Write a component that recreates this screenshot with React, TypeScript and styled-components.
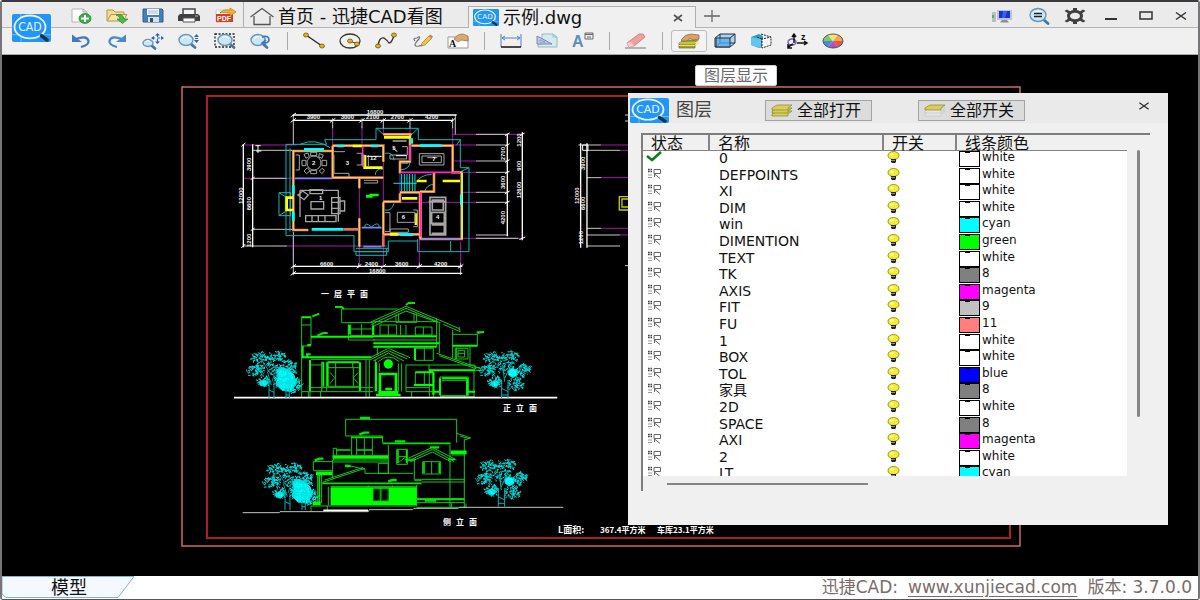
import React from "react";
import styled, { createGlobalStyle } from "styled-components";

const GlobalStyle = createGlobalStyle`
  *, *::before, *::after { box-sizing: border-box; }
  body {
    margin: 0;
    background: #ffffff;
    font-family: "DejaVu Sans", "Noto Sans CJK SC", sans-serif;
    color: #111111;
  }
  button { font-family: inherit; color: inherit; }
`;

const Window = styled.div`
  display: flex;
  flex-direction: column;
  min-height: 100vh;
  border: 2px solid #77757a;
  border-top-color: #3d3a3e;
  border-bottom: 1px solid #55545a;
  border-radius: 3px;
  overflow: hidden;
`;

const Header = styled.header`
  position: relative;
  border-bottom: 1px solid #a8a8a8;
  background: #f0f0f0;
`;

const BrandMark = styled.div`
  position: absolute;
  left: 10px;
  top: 12px;
  display: flex;
`;

const TitleRow = styled.div`
  display: flex;
  height: 26px;
  padding-left: 61px;
  border-bottom: 1px solid #b4b4b4;
  background: #ebebeb;
`;

const ToolRow = styled.div`
  display: flex;
  align-items: center;
  height: 26px;
  padding-left: 61px;
`;

const IconButton = styled.button<{ $active?: boolean; $width?: number }>`
  display: flex;
  flex: none;
  align-items: center;
  justify-content: center;
  width: ${(p) => p.$width ?? 36}px;
  height: 22px;
  padding: 0;
  border: 1px solid ${(p) => (p.$active ? "#bdbdbd" : "transparent")};
  border-radius: 3px;
  background: ${(p) => (p.$active ? "#f3f3f3" : "transparent")};
`;

const ButtonStrip = styled.div`
  display: flex;
  align-items: center;
  padding-top: 3px;
`;

const QuickBar = styled(ButtonStrip)`
  border-right: 1px solid #b0b0b0;
`;

const WindowControls = styled(ButtonStrip)`
  margin-left: auto;
`;

const Separator = styled.span`
  width: 1px;
  height: 18px;
  margin: 0 8px;
  background: #a9a9a9;
`;

const Tab = styled.button<{ $active?: boolean }>`
  display: flex;
  align-items: center;
  width: ${(p) => (p.$active ? 192 : 224)}px;
  height: 22px;
  padding: 0 0 0 4px;
  border: 0;
  background: transparent;
  font-size: 18px;
  line-height: 22px;
  white-space: nowrap;
  text-align: left;
  gap: ${(p) => (p.$active ? 4 : 2)}px;
`;

const TabHolder = styled.div<{ $active?: boolean }>`
  display: flex;
  align-items: center;
  height: 22px;
  margin-top: 4px;
  ${(p) =>
    p.$active &&
    `
    border: 1px solid #b0b0b0;
    border-bottom: 0;
    background: #f0f0f0;
  `}
`;

const Canvas = styled.main`
  position: relative;
  display: flex;
  flex: 1;
  min-height: 521px;
  background: #000000;
`;

const Drawing = styled.svg`
  display: block;
  flex: 1;
  min-width: 0;
  fill: none;
`;

const Tooltip = styled.div`
  position: absolute;
  left: 693px;
  top: 10px;
  padding: 0 8px;
  border: 1px solid #d0d0d0;
  border-radius: 2px;
  background: #ffffff;
  color: #6a6a6a;
  font-size: 16px;
  line-height: 19px;
`;

const Dialog = styled.section`
  position: absolute;
  left: 626px;
  top: 38px;
  width: 540px;
  padding-bottom: 34px;
  background: #f0f0f0;
`;

const DialogHeader = styled.div`
  display: flex;
  align-items: center;
  height: 30px;
  padding: 4px 10px 0 2px;
  background: #eaeaea;
`;

const DialogTitle = styled.h2`
  width: 89px;
  margin: 0 0 0 7px;
  color: #444444;
  font-size: 18px;
  font-weight: 400;
  line-height: 24px;
`;

const DialogButton = styled.button`
  display: flex;
  align-items: center;
  width: 107px;
  height: 21px;
  margin-right: 46px;
  padding: 2px 0 0 5px;
  border: 1px solid #a3a3a3;
  background: #dcdcdc;
  font-size: 16px;
  line-height: 18px;
  white-space: nowrap;
  gap: 4px;
`;

const CloseDialog = styled(IconButton)`
  margin: 0 0 8px auto;
`;

const ListFrame = styled.div`
  display: grid;
  grid-template-columns: 484px 1fr;
  margin: 10px 18px 0 13px;
  border-top: 2px solid #7d7d7d;
  border-left: 2px solid #7d7d7d;
`;

const ListView = styled.div`
  height: 341px;
  overflow: hidden;
  background: #ffffff;
`;

const LayerTable = styled.table`
  width: 100%;
  height: 348px;
  border-collapse: separate;
  border-spacing: 0;
  table-layout: fixed;
`;

const HeadCell = styled.th<{ $width: number; $last?: boolean }>`
  width: ${(p) => p.$width}px;
  height: 16px;
  padding: 3px 0 0 8px;
  border-right: ${(p) => (p.$last ? "0" : "2px solid #858585")};
  border-bottom: 1px solid #858585;
  background: #f0f0f0;
  font-size: 16px;
  font-weight: 400;
  line-height: 12px;
  text-align: left;
`;

const Cell = styled.td<{ $indent: number; $size?: number }>`
  height: auto;
  padding: 0 0 0 ${(p) => p.$indent}px;
  font-size: ${(p) => p.$size ?? 14}px;
  line-height: 14px;
  vertical-align: top;
  white-space: nowrap;
`;

const ColorEntry = styled.div`
  display: flex;
  height: 16px;
  line-height: 13px;
  gap: 2px;
`;

const Swatch = styled.span<{ $color: string }>`
  width: 21px;
  height: 16px;
  border: 1px solid #000000;
  background: ${(p) => p.$color};
  &::before {
    content: "";
    display: block;
    width: 5px;
    height: 1px;
    margin-left: 5px;
    background: #000000;
  }
`;

const VerticalTrack = styled.div`
  padding: 15px 0 0 10px;
`;

const VerticalThumb = styled.div`
  width: 3px;
  height: 267px;
  border-radius: 2px;
  background: #858585;
`;

const HorizontalTrack = styled.div`
  height: 15px;
  padding: 7px 0 0 24px;
`;

const HorizontalThumb = styled.div`
  width: 201px;
  height: 2px;
  background: #858585;
`;

const Footer = styled.footer`
  display: flex;
  align-items: center;
  justify-content: space-between;
  height: 23px;
  padding-right: 6px;
  background: #ffffff;
`;

const ModelTab = styled.button`
  display: grid;
  width: 134px;
  height: 23px;
  padding: 0;
  border: 0;
  background: transparent;
  font-size: 18px;
  line-height: 23px;
  > * { grid-area: 1 / 1; }
`;

const Credits = styled.div`
  display: flex;
  color: #7b6b69;
  font-size: 17px;
  line-height: 23px;
  white-space: nowrap;
  gap: 10px;
  a { color: inherit; text-underline-offset: 3px; }
`;

function Logo({ width, height }: { width: number; height: number }) {
  return (
    <svg width={width} height={height} viewBox="0 0 39 27" preserveAspectRatio="none" aria-hidden="true">
      <rect width="39" height="27" rx="2" fill="#2196f8" />
      <path d="M0 20H39M9 0V27" stroke="#6fbcfb" strokeWidth="1" />
      <ellipse cx="18" cy="12.500" rx="15.500" ry="11" fill="#2196f8" stroke="#e8f5ff" strokeWidth="1.800" />
      <text x="18" y="16" fill="#e8f5ff" fontSize="11" fontFamily="DejaVu Sans, sans-serif" textAnchor="middle">CAD</text>
      <path d="M29.500 21L35 25" stroke="#16364f" strokeWidth="3.500" strokeLinecap="round" />
    </svg>
  );
}

/* Every glyph is drawn around the origin of a 28 x 20 box. */
const Glyph = ({ children }: { children: React.ReactNode }) => (
  <svg width="28" height="20" viewBox="-14 -10 28 20" fill="none" aria-hidden="true">{children}</svg>
);

const lens = (cx: number, cy: number, r: number) => (
  <>
    <path d={`M${cx + r - 1} ${cy + r - 2}l4 3.500`} stroke="#3f78a8" strokeWidth="2.800" strokeLinecap="round" />
    <ellipse cx={cx} cy={cy} rx={r + 1} ry={r - 0.5} fill="#c9e8f7" stroke="#6a94ba" strokeWidth="1.400" />
    <path d={`M${cx - r + 2} ${cy - 1}q${r - 2} -${r - 1} ${2 * r - 4} 0`} stroke="#ffffff" strokeWidth="1.200" />
  </>
);

const node = (x: number, y: number) => (
  <ellipse cx={x} cy={y} rx="2.500" ry="2" fill="#e3b51a" stroke="#6d5307" strokeWidth=".8" />
);

const glyphs: Record<string, React.ReactNode> = {
  新建: (
    <>
      <path d="M-9 -7H2L6 -4V6H-9Z" fill="#fbfbfb" stroke="#b5b5b5" />
      <path d="M2 -7V-4H6" stroke="#a5a5a5" />
      <ellipse cx="4" cy="2.500" rx="6" ry="5" fill="#35ab45" stroke="#1f8530" strokeWidth=".7" />
      <path d="M0 2.500H8M4 -1V6" stroke="#fff" strokeWidth="2" />
    </>
  ),
  打开: (
    <>
      <path d="M-10 5V-6H-4L-2 -4H7V-1" fill="#f3dc94" stroke="#b99447" />
      <path d="M-10 5L-6 -1.500H10L6 5Z" fill="#f6e3a6" stroke="#b99447" />
      <path d="M-1 -1Q6 -3 7 3H11L5.500 7.500L0 3H3Q3 0 -1 -1Z" fill="#4cb848" stroke="#2b8630" strokeWidth=".7" />
    </>
  ),
  保存: (
    <>
      <path d="M-10 -7H9L10 -6V6H-10Z" fill="#4480b8" stroke="#2d5d92" />
      <path d="M-6 -7H6V-1H-6Z" fill="#f5f9fc" />
      <path d="M-5 -5H5M-5 -3H5" stroke="#a9bccc" />
      <path d="M-5 1H6V6H-5Z" fill="#d8e0e6" />
      <path d="M-3 2H0V6H-3Z" fill="#2d5070" />
    </>
  ),
  打印: (
    <>
      <path d="M-6 -1V-7H6V-1" fill="#f4f4f4" stroke="#444" strokeWidth="1.500" />
      <path d="M-9 -2H9L11 0V5H-11V0Z" fill="#3e4043" />
      <path d="M-6 2H6V6H-6Z" fill="#fafafa" stroke="#555" />
      <path d="M6 0H9" stroke="#bbb" strokeWidth="1" />
    </>
  ),
  转换PDF: (
    <>
      <path d="M-9 -6H3V6H-9Z" fill="#fafafa" stroke="#ccc" />
      <path d="M-9 -2H8V6H-9Z" fill="#dc3a22" />
      <text x="-8" y="5" fontSize="7" fontWeight="700" fontFamily="Liberation Sans, sans-serif" fill="#fff">PDF</text>
      <path d="M-5 -3Q-2 -7 5 -6V-8L11 -4L5 0V-3Q-1 -4 -5 -3Z" fill="#efb52c" stroke="#b87c13" strokeWidth=".7" />
    </>
  ),
  首页: <path d="M-11.500 0L0 -8.500L11.500 0M-8 -1V7.500H8V-1" stroke="#555" strokeWidth="1.300" />,
  新标签: <path d="M-8 0H8M0 -6V6" stroke="#666" strokeWidth="1.300" />,
  关闭标签: <path d="M-4 -3L4 3M4 -3L-4 3" stroke="#555" strokeWidth="1.700" />,
  远程: (
    <>
      <path d="M-11 -4H-7V6H-11Z" fill="#b8bec4" />
      <path d="M-10 -1V2" stroke="#3da344" strokeWidth="1.500" />
      <path d="M-6 -6H9V4H-6Z" fill="#bfc4ce" />
      <path d="M-4 -5H7V2H-4Z" fill="#1834d0" />
      <path d="M0 -5H4L2 2H-1Z" fill="#3f5df2" />
      <path d="M-1 4H4L6 6.500H-3Z" fill="#888e97" />
    </>
  ),
  查看: <>{lens(-1, -1, 7)}<path d="M-5 -2.500H3M-5 .5H3" stroke="#222" strokeWidth="1.400" /></>,
  设置: (
    <>
      <path d="M-2 -8H2V8H-2ZM-10.500 -5L-8 -6.500L10.500 5L8 6.500ZM10.500 -5L8 -6.500L-10.500 5L-8 6.500Z" fill="#3f3f3f" />
      <ellipse rx="6.500" ry="4.800" fill="#ebebeb" stroke="#3f3f3f" strokeWidth="3" />
    </>
  ),
  最小化: <path d="M-6 3H6" stroke="#333" strokeWidth="1.800" />,
  最大化: <path d="M-6 -4H6V3H-6Z" stroke="#333" strokeWidth="1.500" />,
  关闭: <path d="M-5 -3.500L5 3.500M5 -3.500L-5 3.500" stroke="#333" strokeWidth="1.500" />,
  撤销: (
    <>
      <path d="M-5 -2Q6 -6 7.500 0Q8 4 0 6" stroke="#4377c4" strokeWidth="2.300" />
      <path d="M-9 -6.500V1H1Z" fill="#4377c4" />
    </>
  ),
  重做: (
    <>
      <path d="M5 -2Q-6 -6 -7.500 0Q-8 4 0 6" stroke="#4b87cc" strokeWidth="2.300" />
      <path d="M9 -6.500V1H-1Z" fill="#4b87cc" />
    </>
  ),
  平移: (
    <>
      {lens(-5, 2, 4)}
      <path d="M-1 -3H10M4.500 -7V1" stroke="#2a64b8" strokeWidth="1.200" strokeDasharray="3 2" />
      <path d="M4.500 -8L7 -5.500H2ZM4.500 3L7 .5H2ZM-2 -3L1 -5V-1ZM11 -3L8 -5V-1Z" fill="#2a64b8" />
    </>
  ),
  缩放: (
    <>
      {lens(-3, -1, 6)}
      <path d="M7.500 -7L10 -4H5ZM7.500 2L10 -1H5Z" fill="#2a64b8" />
      <path d="M6 -2.500H9" stroke="#2a64b8" />
    </>
  ),
  窗口缩放: (
    <>
      <rect x="-10" y="-7" width="19" height="13" stroke="#222" strokeWidth="1.300" strokeDasharray="2 1.500" />
      {lens(0, -1, 6)}
    </>
  ),
  上一视图: <>{lens(-3, -1, 6)}<path d="M1 -4Q8 -6 8 -1Q8 2 2 2M5 -1L1 2L5 4" stroke="#3f79bf" strokeWidth="1.700" /></>,
  直线: <><path d="M-8 -6L8 5" stroke="#222" strokeWidth="1.300" />{node(-8, -6)}{node(8, 5)}</>,
  圆: <><ellipse rx="10" ry="7" stroke="#333" strokeWidth="1.300" /><path d="M0 0L7 3" stroke="#333" />{node(0, 0)}{node(7, 3)}</>,
  曲线: <><path d="M-8 5Q-7 -4 -2 -3Q1 -1 3 2Q6 2 8 -6" stroke="#333" strokeWidth="1.300" />{node(-8, 5)}{node(8, -6)}</>,
  画笔: (
    <>
      <path d="M-7 0Q-10 -3 -5 -3Q-1 -6 -3 -2Q-9 4 -6 5Q-2 6 2 3" stroke="#6b7480" strokeWidth="1.200" />
      <path d="M0 2L7 -5L10 -3L3 4L-1 5Z" fill="#f0c545" stroke="#a27823" strokeWidth=".7" />
      <path d="M7 -5L8 -6.500L11 -4.500L10 -3Z" fill="#dc6a61" />
    </>
  ),
  文字: (
    <>
      <path d="M-10 -4H10V7H-10Z" fill="#fdfdfd" stroke="#999" />
      <path d="M-4 -2Q-1 -7 5 -7L10 -5V0L3 -1L0 1Z" fill="#d9aa76" stroke="#9a6b38" strokeWidth=".7" />
      <text x="-9" y="6" fontSize="10" fontWeight="700" fontFamily="Liberation Serif, serif" fill="#111">A</text>
    </>
  ),
  测量长度: <><path d="M-10 -7V6M10 -7V6M-9 -3H9M-6 -5L-9 -3L-6 -1M6 -5L9 -3L6 -1" stroke="#4c7fd1" /><path d="M-10 6H10" stroke="#111" strokeWidth="1.500" /></>,
  测量面积: (
    <>
      <path d="M-5 -7H6L10 -4V6H-9V3H-5Z" fill="#d3ecf2" stroke="#97b9c4" />
      <path d="M6 -7V-4H10" stroke="#97b9c4" />
      <path d="M-10 -5V3H5Z" fill="#bcc7e3" stroke="#7a8ab6" />
      <path d="M-7 -1V1H-2Z" fill="#f2f5fb" stroke="#7a8ab6" strokeWidth=".7" />
    </>
  ),
  文字样式: (
    <>
      <text x="-11" y="6" fontSize="16" fontWeight="700" fontFamily="Liberation Sans, sans-serif" fill="#5b8dbf">A</text>
      <path d="M2 -8H10V-2H2ZM2 -6.500H10M4 -4H8" stroke="#666" />
    </>
  ),
  橡皮擦: (
    <>
      <path d="M-11 7H10" stroke="#777" strokeWidth="1.200" />
      <path d="M-9 2L3 -7H7L9 -4L-2 5L-7 6Z" fill="#eda29d" stroke="#c5746e" strokeWidth=".8" />
      <path d="M-9 2L-5 1L-2 5L-7 6Z" fill="#f8cfcb" />
    </>
  ),
  图层显示: (
    <>
      <path d="M-10 2L-5 -1H10L6 2V7H-10Z" fill="#a9a12d" stroke="#6d681a" strokeWidth=".7" />
      <path d="M-10 2H6L10 -1M-10 4.500H6L10 2" stroke="#e5df7c" />
      <path d="M-8 -1Q-4 -7 2 -7L10 -6L10 -2L4 -1L1 -3L-2 0H-7Z" fill="#d6a36b" stroke="#8d6032" strokeWidth=".7" />
    </>
  ),
  三维视图: (
    <>
      <path d="M-10 -3L-5 -7H10V2L5 6H-10Z" fill="#a8d4f2" stroke="#234" />
      <path d="M-5 -7V2H10M-5 2L-10 6" stroke="#234" />
      <path d="M-9 -3H5V6H-9Z" fill="#5aaae6" fillOpacity=".75" stroke="#234" />
      <path d="M5 -3L10 -7" stroke="#234" />
    </>
  ),
  线框: (
    <>
      <path d="M-10 -4L-2 -7L2 -5V6L-2 7L-10 4Z" fill="#2a9cd2" />
      <path d="M-10 -4L0 -2V7L-10 4Z" fill="#63c5ea" />
      <path d="M0 -7L10 -4V4L1 7V-2L10 -4M1 -2L-4 -4" fill="#f8f8f8" stroke="#222" strokeDasharray="2 1" />
    </>
  ),
  坐标: (
    <>
      <ellipse cx="-5" cy="1" rx="4" ry="3" stroke="#765fc5" strokeWidth="1.500" />
      <path d="M-3 2V-6M-5 -4L-3 -7L-1 -4M0 2H9M7 0L10 2L7 4M-4 3L-9 6M-9 3V7H-5" stroke="#111" strokeWidth="1.500" />
      <text x="4" y="-1" fontSize="9" fontWeight="700" fontFamily="Liberation Sans, sans-serif" fill="#111">z</text>
    </>
  ),
  颜色: (
    <>
      <path d="M0 0L-10 0A10 7 0 0 1 -5 -6Z" fill="#82ca62" />
      <path d="M0 0L-5 -6A10 7 0 0 1 5 -6Z" fill="#f3e675" />
      <path d="M0 0L5 -6A10 7 0 0 1 10 0Z" fill="#f2a549" />
      <path d="M0 0L10 0A10 7 0 0 1 5 6Z" fill="#e2574a" />
      <path d="M0 0L5 6A10 7 0 0 1 -5 6Z" fill="#b44cc2" />
      <path d="M0 0L-5 6A10 7 0 0 1 -10 0Z" fill="#4a8ade" />
      <ellipse rx="10" ry="7" stroke="#555" />
    </>
  ),
};

function Tool({ name, active, width }: { name: string; active?: boolean; width?: number }) {
  return (
    <IconButton type="button" aria-label={name} $active={active} $width={width}>
      <Glyph>{glyphs[name]}</Glyph>
    </IconButton>
  );
}

const toolGroups = [
  ["撤销", "重做", "平移", "缩放", "窗口缩放", "上一视图"],
  ["直线", "圆", "曲线", "画笔", "文字"],
  ["测量长度", "测量面积", "文字样式"],
  ["橡皮擦"],
  ["图层显示", "三维视图", "线框", "坐标", "颜色"],
];

const layers: [string, string, string][] = [
  ["0", "white", "#ffffff"],
  ["DEFPOINTS", "white", "#ffffff"],
  ["XI", "white", "#ffffff"],
  ["DIM", "white", "#ffffff"],
  ["win", "cyan", "#00ffff"],
  ["DIMENTION", "green", "#00ff00"],
  ["TEXT", "white", "#ffffff"],
  ["TK", "8", "#808080"],
  ["AXIS", "magenta", "#ff00ff"],
  ["FIT", "9", "#c0c0c0"],
  ["FU", "11", "#ff7f7f"],
  ["1", "white", "#ffffff"],
  ["BOX", "white", "#ffffff"],
  ["TOL", "blue", "#0000ff"],
  ["家具", "8", "#808080"],
  ["2D", "white", "#ffffff"],
  ["SPACE", "8", "#808080"],
  ["AXI", "magenta", "#ff00ff"],
  ["2", "white", "#ffffff"],
  ["LT", "cyan", "#00ffff"],
];

const StateIcon = ({ current }: { current: boolean }) => (
  <svg width="18" height="12" viewBox="0 0 18 12" fill="none" role="img" aria-label={current ? "当前" : "图层"}>
    {current ? (
      <path d="M1 5L6 9L15 1" stroke="#0c7d1c" strokeWidth="2.500" />
    ) : (
      <>
        <path d="M2 1.500H6M2 3.500H6" stroke="#444" strokeWidth="1.300" strokeDasharray="1.700 .8" />
        <path d="M2 7H6M2 9.500H6" stroke="#999" />
        <path d="M8 1.500H14.500V5.500H8ZM8.500 6L14 10.500M8.500 6V9" stroke="#666" />
      </>
    )}
  </svg>
);

const Bulb = () => (
  <svg width="13" height="13" viewBox="0 0 13 13" role="img" aria-label="开">
    <ellipse cx="6.500" cy="4.500" rx="5.500" ry="4" fill="#f5ee2b" stroke="#9a941a" />
    <ellipse cx="5" cy="3.500" rx="2" ry="1.200" fill="#fffcb8" />
    <path d="M4 8H9V11L8 12H5L4 11Z" fill="#222" />
    <path d="M4 9.500H8" stroke="#aaa" strokeWidth=".8" />
  </svg>
);

const Stack = ({ single }: { single?: boolean }) => (
  <svg width="22" height="14" viewBox="0 0 22 14" aria-hidden="true">
    {[8, 5, 2].map((y, i) => (
      <path
        key={y}
        d={`M1 ${y + 2}L6 ${y - 1}H21L17 ${y + 2}V${y + 4}H1Z`}
        fill={single && i < 2 ? "#e6e6e6" : "#d8cf55"}
        stroke={single && i < 2 ? "#c4c4c4" : "#8a8330"}
        strokeWidth=".7"
      />
    ))}
  </svg>
);

/* Foliage: short twigs scattered over clumps with a fixed pseudo-random sequence. */
function foliage(clumps: number[][]) {
  let seed = 17;
  const next = () => {
    seed = (seed * 16807) % 2147483647;
    return seed / 2147483647;
  };
  let d = "";
  clumps.forEach(([cx, cy, rx, ry, count]) => {
    for (let i = 0; i < count; i++) {
      const a = next() * Math.PI * 2;
      const r = Math.sqrt(next());
      const x = Math.round(cx + Math.cos(a) * rx * r);
      const y = Math.round(cy + Math.sin(a) * ry * r);
      d += `M${x} ${y}l${Math.round(next() * 14 - 7)} ${Math.round(next() * 10 - 5)}l${Math.round(next() * 8 - 4)} ${Math.round(next() * 8 - 4)}`;
    }
  });
  return d;
}

const pairFoliage = foliage([
  [40, 18, 26, 16, 60], [90, 16, 26, 16, 60], [24, 56, 26, 18, 60], [50, 88, 18, 14, 40],
  [122, 46, 24, 20, 60], [76, 48, 28, 22, 36], [115, 78, 36, 34, 150], [142, 100, 22, 24, 80],
]);
const singleFoliage = foliage([
  [38, 18, 24, 16, 60], [90, 14, 28, 14, 60], [22, 56, 24, 18, 60], [46, 90, 20, 16, 54],
  [130, 56, 20, 20, 64], [76, 45, 34, 22, 44], [108, 95, 24, 20, 64],
]);

const PairTree = ({ x, y }: { x: number; y: number }) => (
  <g transform={`translate(${x} ${y})`} stroke="#00e0e0" strokeWidth="3">
    <path d="M88 55L104 48L124 56L140 70L146 92L132 120L104 116L86 98L92 76Z" fill="#00ffff" />
    <path d="M36 90L50 84L62 92L56 102L40 102Z" fill="#00ffff" />
    <path d={pairFoliage} />
    <path d="M65 85V140M80 90V140M65 115L80 122M116 110V140M126 110V140M116 130H126" stroke="#00b4b4" />
    <path d="M72 100L60 60M74 90L90 40M72 70L40 20" stroke="#009c9c" />
  </g>
);

const SingleTree = ({ x, y }: { x: number; y: number }) => (
  <g transform={`translate(${x} ${y})`} stroke="#00d8d8" strokeWidth="3">
    <path d="M84 58L96 50L112 56L112 70L98 78L86 70Z" fill="#00ffff" />
    <path d="M32 92L46 86L58 92L52 104L38 104Z" fill="#00ffff" />
    <path d={singleFoliage} />
    <path d="M65 85V140M84 85V140M65 110L84 120M65 130H84M74 90L68 40M74 80L98 30" stroke="#00b4b4" />
  </g>
);

const Spaced = ({ text, x, y, step }: { text: string; x: number; y: number; step: number }) => (
  <>
    {Array.from(text).map((c, i) => (
      <text key={i} x={x + i * step} y={y} fontSize="8" fontWeight="700">{c}</text>
    ))}
  </>
);

const dims: [string, number, number][] = [
  ["16800", 435, 56], ["3900", 250, 73], ["3000", 352, 73], ["2100", 428, 73], ["2700", 502, 73], ["4200", 605, 73],
  ["6600", 290, 512], ["2400", 424, 512], ["3600", 515, 512], ["4200", 632, 512], ["16800", 442, 534],
];
const sideDims: [string, number, number][] = [
  ["12000", 38, 302], ["3900", 64, 208], ["6600", 64, 326], ["1200", 62, 436],
  ["2700", 826, 176], ["3600", 826, 262], ["4200", 826, 368], ["1200", 872, 135], ["900", 872, 212], ["12600", 872, 285],
  ["12000", 1046, 302], ["3900", 1066, 205], ["6600", 1066, 325], ["1200", 1058, 428],
];
const rooms: [string, number, number][] = [
  ["1", 272, 316], ["2", 251, 210], ["3", 352, 209], ["12", 430, 195], ["5", 492, 165], ["6", 520, 371], ["7", 612, 197], ["4", 623, 371],
];

const FloorPlan = () => (
  <g transform="translate(230 95) scale(.3333)" strokeWidth="3">
    <path stroke="#a818a8" d="M308 95V150M396 95V150M460 95V120M540 95V120M668 95V150M388 250V514M460 180V330M460 440V514M568 430V514M692 440V514M166 453H470M40 150H200M40 250H310M510 200V325M668 118H877M668 150H738M668 198H738M690 232H738M690 292H738M510 322H738M700 430H877M190 420V500M1113 150H1220M1113 248H1220M1113 400H1220M1170 166H1220M1170 420H1220" />
    <path stroke="#c8c8c8" d="M190 60V150M190 410V540M308 70V100M396 70V100M460 70V100M540 70V100M668 70V100M676 60V118M68 166H190M68 250H170M68 403H190M40 453H170M738 118H835M738 150H835M738 198H835M738 232H835M738 292H835M738 322H835M738 420H835M738 430H865M386 505V518M568 505V518M692 505V540M1071 166H1170M1071 420H1170M1071 453H1170M1045 150H1113M1071 248H1113M1071 400H1113M1185 60H1195M1185 78H1195M1185 512H1195" />
    <path stroke="#ffffff" strokeWidth="4" d="M188 60H680M188 76H670M40 148V457M68 148V457M188 514H697M188 535H697M832 116V424M877 112V436M1052 145V458M1071 145V458" />
    <path stroke="#ffffff" strokeWidth="3" d="M182 66L198 54M182 82L198 70M300 82L316 70M388 82L404 70M452 82L468 70M532 82L548 70M662 82L676 70M182 520L198 508M182 541L198 529M380 520L394 508M452 520L468 508M560 520L576 508M684 520L700 508M34 154L46 144M34 459L46 447M62 254L74 246M62 407L74 399M76 152H92M84 150V174M78 168H94M825 122L839 114M825 154L839 146M825 202L839 194M825 236L839 228M825 296L839 288M825 326L839 318M870 122L884 114M868 434L886 426" />
    <path stroke="#10b8b8" d="M168 148H290L284 134H438V100H565V134H691V218H717V470H563V432M168 148V422H372V470H475V438H563M180 160V410M210 148Q255 128 300 158M147 293H182V362H147ZM147 293L166 305V350L147 362M378 460H475M378 470V481H470V460M385 470H465M440 100L460 118M565 100L545 118M465 175Q490 170 492 196M510 205H535M540 200Q540 222 512 225M436 240Q436 220 460 222M465 345Q485 350 492 325M404 398Q404 378 425 396Q446 376 448 398M584 290Q590 270 610 268M560 262Q570 240 605 238M662 438V468M691 134L680 150M717 218L692 230" />
    <path stroke="#00e5e5" strokeWidth="3" d="M515 237V290M523 237V290M531 237V290M539 237V290M547 237V290M555 237V290M490 265H560" />
    <path stroke="#e07058" strokeWidth="8" d="M190 165V405H235M190 168H308M308 152H460V200M308 152V248H460M460 118H545M540 120V200H510V235M545 152H668V232H695V432H572V292M460 322V418M510 292H570V430M460 320H510V295M388 250V280M388 370V455M460 400V455M340 403H388M462 418H568M612 232V290H570" />
    <path stroke="#f6e458" strokeWidth="3" d="M190 165V405H235M190 168H308M308 152H460V200M308 152V248H460M460 118H545M540 120V200H510V235M545 152H668V232H695V432H572V292M460 322V418M510 292H570V430M460 320H510V295M388 250V280M388 370V455M462 418H568M612 232V290H570" />
    <path stroke="#ff20d0" strokeWidth="5" d="M512 232H690M398 155V215M540 150V198M572 292V425" />
    <path stroke="#ffff00" strokeWidth="8" d="M462 127H542M368 153H396M400 218H458M560 258H590M638 258H690M516 310H562M190 308H170V345H190M480 418H505M405 180V215M558 355V390" />
    <path stroke="#00ffff" strokeWidth="8" d="M320 153H343M422 153H446M570 152H635M190 270V298M190 350V378M245 403H340M508 419H550M694 298V330M222 163H282M545 130V146" />
    <path stroke="#8080ff" strokeWidth="5" d="M195 250H308M572 432H692M395 398H455M400 455H455" />
    <path stroke="#b4ff50" strokeWidth="4" d="M697 235V432" />
    <path stroke="#00ff00" strokeWidth="8" d="M408 304H428M418 300H446" />
    <g stroke="#a6a6a6">
      <circle cx="252" cy="204" r="21" />
      <path d="M242 172H260V182H242ZM242 226H260V236H242ZM216 196H228V212H216ZM276 196H290V212H276ZM222 178L234 174L238 184L228 190ZM268 176L280 180L276 190L266 186ZM222 228L232 218L240 228L230 236ZM268 228L276 220L284 226L276 236ZM197 180H208V225H197M312 180V235H357V247M312 170H345" />
      <path d="M210 286H325V380M210 286V366M243 320H281V342H243ZM227 362H318V380H227ZM305 308H330V356H305ZM330 318H344V348H330M246 362V380M265 362V380M285 362V380M306 322H330M306 340H330M204 300L218 288L235 300L222 314ZM240 284H278V296H240Z" strokeWidth="4" />
      <path d="M380 175H396V210H380M402 178V215M415 180V215M480 180H530V192H480ZM516 155H532V180M568 176H642V210H568ZM576 183H634V203H576ZM592 188H622M502 352H555V382H502ZM550 345H562V395H550M480 402H535V412H480ZM402 256H443V264H402M465 353H480V410H465" />
      <path d="M600 307H647V420H600ZM607 315H640V345H607ZM605 352H643V385H605ZM605 390H643V415H605M596 320H650" strokeWidth="5" />
    </g>
    <path stroke="#c8c800" strokeWidth="4" d="M1196 305H1168V345H1196M1196 312H1176V336H1196" />
    <path stroke="#ffffff" strokeWidth="3" d="M490 160L502 170M498 182H530M488 138H530M410 184H455M1058 150H1074V166H1058Z" />
    <g fill="#f4f4f4" stroke="none" fontFamily="Liberation Sans, sans-serif" fontWeight="700" fontSize="18" textAnchor="middle">
      {dims.map(([t, x, y], i) => <text key={i} x={x} y={y}>{t}</text>)}
      {sideDims.map(([t, x, y], i) => <text key={i} transform={`translate(${x} ${y}) rotate(-90)`}>{t}</text>)}
      {rooms.map(([t, x, y], i) => <text key={i} x={x} y={y}>{t}</text>)}
    </g>
  </g>
);

const FrontElevation = () => (
  <g transform="translate(230 285) scale(.3333)" stroke="#18c818" strokeWidth="3">
    <path d="M215 95V338M243 95V180M215 120H243M215 183H243M335 72H505M335 72V113H430M355 118V165H435M362 118V152H428V118M395 118V150M362 132H428M430 118V150M243 223H425M240 225V338M275 230V320M290 230V318M243 308H430M215 320H430M317 232V248M368 232V248M317 248V304M370 248V304M293 248H388M293 304H388M300 262L314 278L300 296M385 262L370 278L385 296M408 225V338M418 225V338M243 240H275M272 320V338M235 320V338" />
    <path d="M420 112L528 64L640 110L690 132M424 118L528 70L632 114M430 124L528 78L624 112M640 118L690 140L688 126M498 85V112H560V85M506 85V108M552 85V108M430 110H620M450 120H500V150H450ZM475 120V150M512 120V150M528 120V150M556 126H606V150H556ZM580 126V150M620 100V185M628 115V205M430 165H620M442 188V210M668 135V220M668 148H742V183M740 148L762 138M680 188V222M676 190H714V222H676ZM684 196H704V216H684ZM684 205H704M720 185V242M620 205L750 250M628 212L740 252M597 240H735V248H750L752 256H597ZM598 258V335M555 190H610V226H555ZM583 190V226M556 262H610V300H556ZM583 262V300M630 276H715V332H630ZM636 286H710V330M732 258V335M612 262V330M515 235V320M505 235V320M528 240V320M528 308H598M528 320H610V338M528 240H598M545 320V338M630 335H735" />
    <path d="M425 216L475 190L540 218M425 222L475 197L532 222M430 228L475 204L522 228M445 230Q475 202 508 230M436 225V320M448 235V260" />
    <path d="M215 97H243M218 183V215M232 180H243M243 155H430M358 120V148M430 122V150M215 217H425M232 210V218M240 225V318M293 232H388M293 232V304M390 232V318M430 154H620M430 175H628M430 185H620M668 182H742M597 256H735M636 280H712M610 262V330M556 262H610M438 232V318M280 230V305M555 190V225M630 280V330M712 280V330M552 300H610M612 320H630M715 320H735" stroke="#00ff00" strokeWidth="6" />
    <path d="M247 94L268 86M315 66H335L342 72M262 152L280 144H293M528 60L536 54H555M740 142H762M228 208H242" stroke="#00e800" strokeWidth="6" />
    <circle cx="475" cy="237" r="14" fill="#00ff00" stroke="none" />
    <path d="M450 320V267H498V320M438 330H512M445 322H505M466 312H486" stroke="#00ff00" strokeWidth="8" />
    <path d="M12 338H982" stroke="#ffffff" strokeWidth="5" />
    <PairTree x={52} y={200} />
    <SingleTree x={750} y={200} />
  </g>
);

const SideElevation = () => (
  <g transform="translate(230 410) scale(.3333)" stroke="#18c818" strokeWidth="3">
    <path d="M347 28H680V98M347 28V78H458V98M365 82V135M380 85V135M403 85V135M427 85V135M310 118V150M308 115H320V135M308 140H475M308 150H475M308 156H475M308 150V205M250 155H308M250 155V182H308M263 195V285M275 195V280M278 217L405 175M285 210L400 172M347 165L405 178V190H550M475 105V190M445 160H475V190H445ZM500 118H532V163H500ZM505 140H528M505 158L528 140M524 150L607 112L680 150M532 154L607 118L672 154M540 156L607 126L664 156M553 145V208M575 208H703V216H575M660 105V292M703 88V292M665 135H703M578 155H632V192H578ZM605 155V192M680 70L722 84L703 90M690 78L718 86M560 266H703M560 278H703M560 292H708V280M295 230V286M302 230H560M415 226V232M488 226V232M243 288H560V225M243 288V305M292 288V305M665 280V292" />
    <path d="M302 232H560V286H302Z" fill="#00ff00" stroke="none" />
    <path d="M430 237H450V272H430ZM454 237H475V272H454Z" fill="#001000" stroke="#007000" />
    <path d="M458 100H662M320 120H362M380 120H427M363 82H458M504 120V160M530 120V160M277 220H575M582 157V190M628 157V190M560 268H703M553 210H575M268 190V280M532 150H555M655 148H675" stroke="#00e800" strokeWidth="5" />
    <path d="M308 141H475M258 190H306M662 127H710M248 280H272" stroke="#00ff00" strokeWidth="11" />
    <path d="M390 24H420M388 74L402 68H418M495 94H526M475 214L488 210H500M254 152L268 146H280M600 112H628M585 272H618M345 168H362" stroke="#00e800" strokeWidth="7" />
    <path d="M38 308H148L150 305H415L418 299H548L552 295H685L688 292H1000" stroke="#c4c4c4" />
    <path d="M280 301H414" stroke="#ffffff" strokeWidth="5" />
    <PairTree x={100} y={160} />
    <SingleTree x={740} y={150} />
  </g>
);

function LayerDialog() {
  return (
    <Dialog role="dialog" aria-labelledby="layer-title">
      <DialogHeader>
        <Logo width={39} height={25} />
        <DialogTitle id="layer-title">图层</DialogTitle>
        <DialogButton type="button"><Stack />全部打开</DialogButton>
        <DialogButton type="button"><Stack single />全部开关</DialogButton>
        <CloseDialog type="button" aria-label="关闭" $width={28}><Glyph>{glyphs.关闭}</Glyph></CloseDialog>
      </DialogHeader>
      <ListFrame>
        <ListView>
          <LayerTable>
            <thead>
              <tr>
                <HeadCell $width={67}>状态</HeadCell>
                <HeadCell $width={174}>名称</HeadCell>
                <HeadCell $width={73}>开关</HeadCell>
                <HeadCell $width={170} $last>线条颜色</HeadCell>
              </tr>
            </thead>
            <tbody>
              {layers.map(([name, label, color], i) => (
                <tr key={name}>
                  <Cell $indent={3}><StateIcon current={i === 0} /></Cell>
                  <Cell $indent={9}>{name}</Cell>
                  <Cell $indent={3}><Bulb /></Cell>
                  <Cell $indent={2} $size={12}>
                    <ColorEntry><Swatch $color={color} />{label}</ColorEntry>
                  </Cell>
                </tr>
              ))}
            </tbody>
          </LayerTable>
        </ListView>
        <VerticalTrack><VerticalThumb /></VerticalTrack>
        <HorizontalTrack><HorizontalThumb /></HorizontalTrack>
      </ListFrame>
    </Dialog>
  );
}

export default function App() {
  return (
    <>
      <GlobalStyle />
      <Window>
        <Header>
          <TitleRow>
            <QuickBar>
              {["新建", "打开", "保存", "打印", "转换PDF"].map((n) => <Tool key={n} name={n} />)}
            </QuickBar>
            <TabHolder>
              <Tab type="button"><Glyph>{glyphs.首页}</Glyph>首页 - 迅捷CAD看图</Tab>
            </TabHolder>
            <TabHolder $active>
              <Tab type="button" $active><Logo width={26} height={17} />示例.dwg</Tab>
              <Tool name="关闭标签" width={34} />
            </TabHolder>
            <ButtonStrip>
              <Tool name="新标签" width={32} />
            </ButtonStrip>
            <WindowControls>
              <Tool name="远程" />
              <Tool name="查看" />
              <Tool name="设置" />
              <Tool name="最小化" width={35} />
              <Tool name="最大化" width={35} />
              <Tool name="关闭" width={35} />
            </WindowControls>
          </TitleRow>
          <ToolRow>
            {toolGroups.map((group, g) => (
              <React.Fragment key={g}>
                {g > 0 && <Separator />}
                {group.map((n) => <Tool key={n} name={n} active={n === "图层显示"} />)}
              </React.Fragment>
            ))}
          </ToolRow>
          <BrandMark><Logo width={39} height={28} /></BrandMark>
        </Header>
        <Canvas>
          <Drawing viewBox="2 55 1196 521" preserveAspectRatio="xMinYMin meet" role="img" aria-label="示例.dwg">
            <rect x="182" y="87" width="838" height="459" stroke="#cf6a66" strokeWidth="1.500" />
            <rect x="207" y="96" width="803" height="442" stroke="#a82222" strokeWidth="2" />
            <FloorPlan />
            <FrontElevation />
            <SideElevation />
            <g fill="#ffffff" fontFamily="Noto Sans CJK SC, sans-serif">
              <Spaced text="一层平面" x={321} y={297} step={13} />
              <Spaced text="正立面" x={503} y={411} step={13} />
              <Spaced text="侧立面" x={443} y={525} step={13} />
              <text x="558" y="533" fontSize="9" fontWeight="700">L面积:</text>
              <text x="600" y="533" fontSize="8" fontWeight="700">367.4平方米</text>
              <text x="657" y="533" fontSize="8" fontWeight="700">车库23.1平方米</text>
            </g>
          </Drawing>
          <Tooltip role="tooltip">图层显示</Tooltip>
          <LayerDialog />
        </Canvas>
        <Footer>
          <ModelTab type="button">
            <svg width="134" height="23" viewBox="0 0 134 23" aria-hidden="true">
              <path d="M0 .5H132L116 21.500H4L0 18Z" fill="#f3f9fe" stroke="#7fb2d6" />
            </svg>
            <span>模型</span>
          </ModelTab>
          <Credits>
            <span>迅捷CAD:</span>
            <a href="#site">www.xunjiecad.com</a>
            <span>版本: 3.7.0.0</span>
          </Credits>
        </Footer>
      </Window>
    </>
  );
}
